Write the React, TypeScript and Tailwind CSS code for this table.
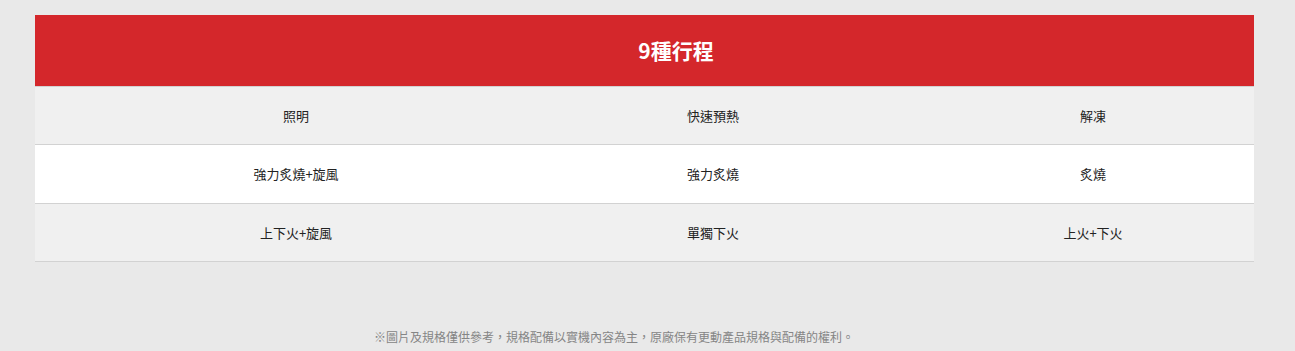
import React from "react";

const rows = [
  { bg: "bg-[#f0f0f0]", h: "h-[58px]", cells: ["照明", "快速預熱", "解凍"] },
  { bg: "bg-white", h: "h-[59px]", cells: ["強力炙燒+旋風", "強力炙燒", "炙燒"] },
  { bg: "bg-[#f0f0f0]", h: "h-[58px]", cells: ["上下火+旋風", "單獨下火", "上火+下火"] },
];

export default function App() {
  return (
    <div
      className="min-h-[351px] w-full bg-[#e9e9e9] pt-[15px]"
      style={{ fontFamily: '"Noto Sans CJK TC", "Noto Sans", sans-serif' }}
    >
      <div className="ml-[35px] w-[1219px] overflow-hidden">
        <div className="w-[1282px]">
          <div className="flex h-[72px] items-center justify-center border-b border-[#d2d2d2] bg-[#d4272b] text-[21px] font-bold text-white">
            9種行程
          </div>
          {rows.map((r, i) => (
            <div
              key={i}
              className={`grid grid-cols-[522px_312px_448px] border-b border-[#d2d2d2] ${r.bg} ${r.h}`}
            >
              {r.cells.map((c, j) => (
                <div key={j} className="flex items-center justify-center text-[13px] text-[#222]">
                  {c}
                </div>
              ))}
            </div>
          ))}
        </div>
      </div>
      <div className="mt-[66px] pl-[374px] text-[12px] leading-[18px] text-[#858585]">
        ※圖片及規格僅供參考，規格配備以實機內容為主，原廠保有更動產品規格與配備的權利。
      </div>
    </div>
  );
}
